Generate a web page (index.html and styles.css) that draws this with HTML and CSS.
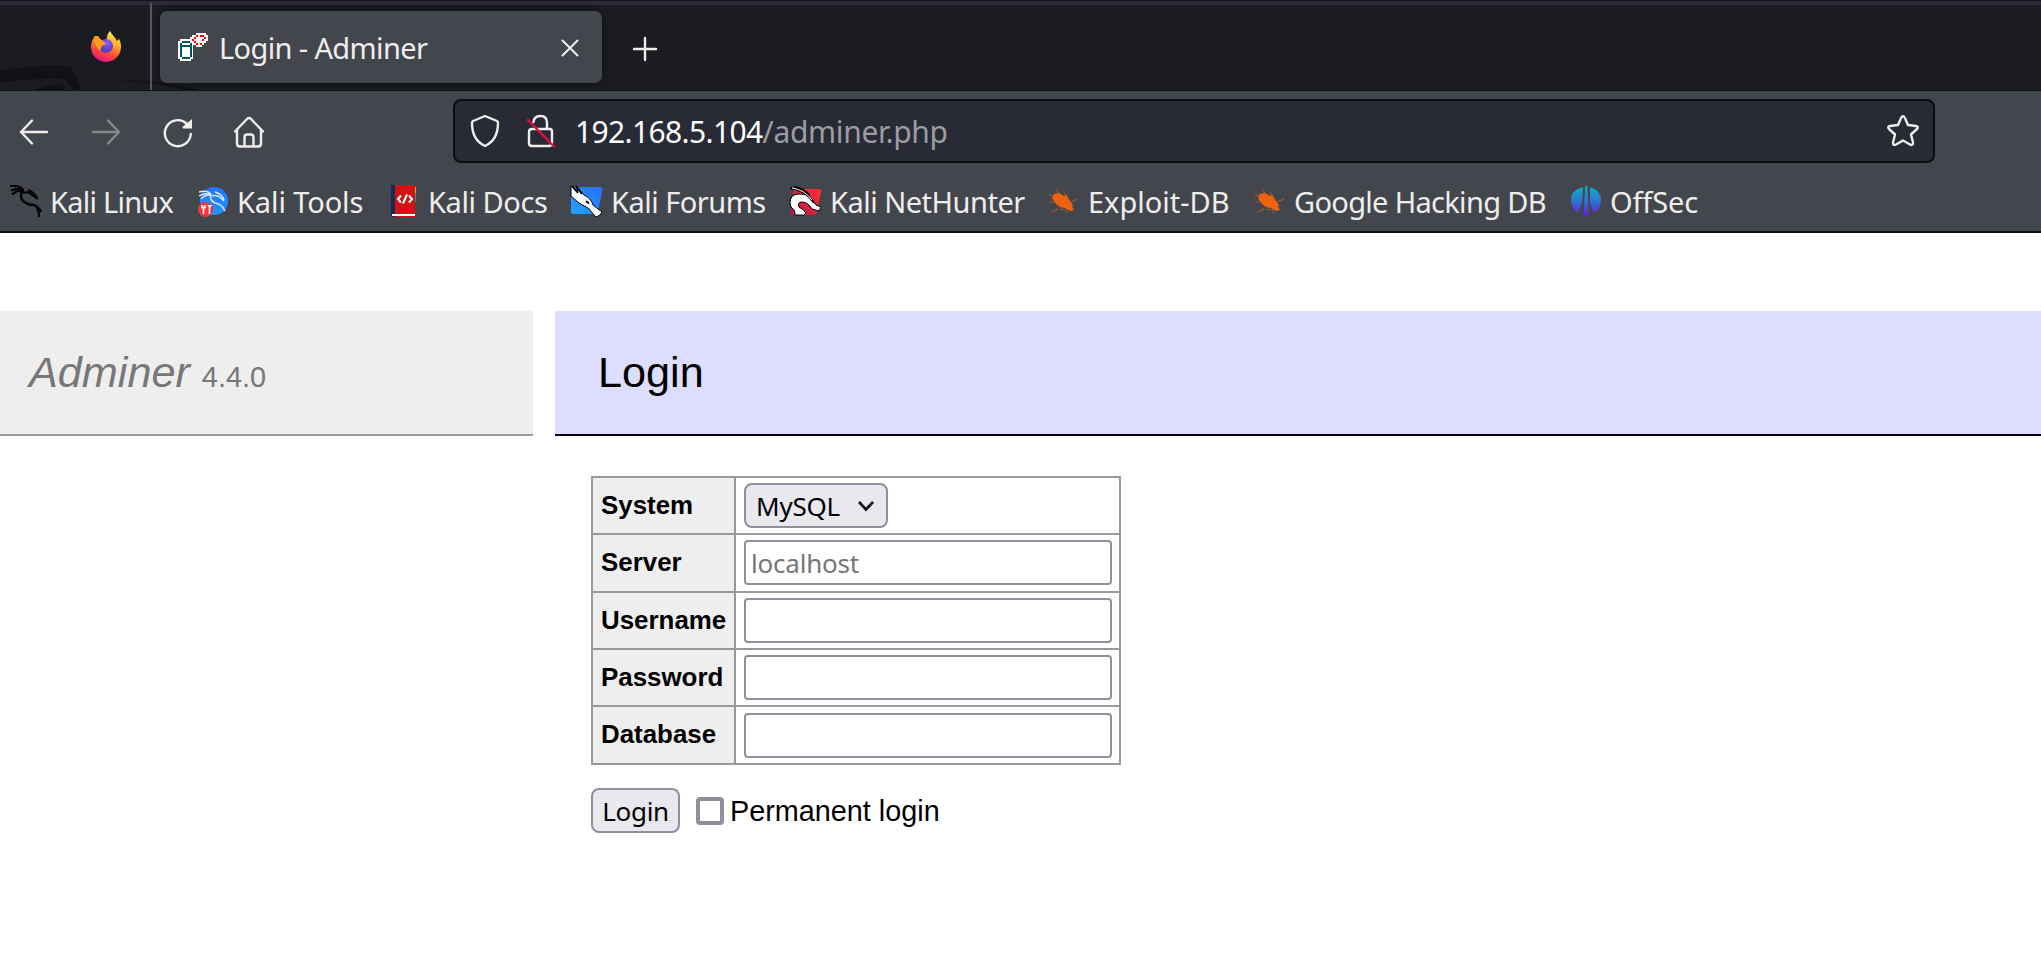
FILE: index.html
```html
<!DOCTYPE html>
<html lang="en">
<head>
<meta charset="utf-8">
<title>Login - Adminer</title>
<link rel="stylesheet" href="styles.css">
</head>
<body>
<header class="browser">
  <div class="tabstrip">
    <svg class="wallpaper" width="240" height="26" viewBox="0 0 240 26" aria-hidden="true">
      <path d="M0 7Q34 0 71 2L82 26H75L64 15Q30 14 0 19Z" fill="#111216"/>
      <path d="M34 26Q48 20 61 20L66 26Z" fill="#111216"/>
      <path d="M110 16Q166 16 200 26H184Q155 18 110 16Z" fill="#111216"/>
    </svg>
    <div class="pinned">
      <svg width="32" height="32" viewBox="0 0 32 32">
        <defs>
          <linearGradient id="fire" x1=".75" y1="0" x2=".35" y2="1"><stop offset="0" stop-color="#fff44f"/><stop offset=".4" stop-color="#ffa22a"/><stop offset=".7" stop-color="#ff4a38"/><stop offset="1" stop-color="#e3118b"/></linearGradient>
          <radialGradient id="globe" cx=".6" cy=".3"><stop offset="0" stop-color="#9a5cff"/><stop offset="1" stop-color="#5b3fc4"/></radialGradient>
        </defs>
        <path d="M1 17C1 12 3 9 5 6L6 9 8 6 10 9 14 11 17 8C17 4 19 2 20 1 22 5 25 7 27 11L29 9C31 12 31 15 31 17A15 15 0 0 1 1 17Z" fill="url(#fire)"/>
        <circle cx="16" cy="16" r="7" fill="url(#globe)"/>
        <path d="M5 6 8 6 10 9Q13 10 16 14L12 16Q10 19 11 21 6 18 4 11Z" fill="#ff9a1f"/>
        <path d="M19 9Q25 12 24 19 27 13 23 8Z" fill="#ffbd3d"/>
      </svg>
    </div>
    <div class="tab">
      <svg class="tab-favicon" width="32" height="32" viewBox="0 0 32 32" shape-rendering="crispEdges">
        <path d="M14 2H18V0H28V2H30V8H28V10H26V12H24V14H18V12H15V26H13V28H2V26H0V8H2V6H12V4H14Z" fill="#fff"/>
        <path d="M4 8H12V10H14V24H12V26H4V24H2V10H4ZM4 14V24H12V14ZM4 10V12H12V10Z" fill="#01526a" fill-rule="evenodd"/>
        <path d="M18 2H20V4H18ZM22 2H26V4H22ZM16 4H18V6H16ZM14 6H16V8H14ZM16 8H18V10H16ZM18 10H20V12H18ZM26 4H28V6H26ZM24 6H26V8H24ZM22 10H24V12H22Z" fill="#f00"/>
      </svg>
      <span class="tab-title">Login - Adminer</span>
      <svg class="tab-close" width="18" height="18" viewBox="0 0 18 18"><path d="M1.500 1.500 16.500 16.500M16.500 1.500 1.500 16.500" class="stroke"/></svg>
    </div>
    <svg class="new-tab" width="26" height="26" viewBox="0 0 26 26"><path d="M13 2V24M2 13H24" class="stroke bold"/></svg>
  </div>

  <div class="navbar">
    <div class="nav-buttons">
      <svg width="32" height="32" viewBox="0 0 32 32"><path d="M14 4.500 3 16 14 27.500M3 16H29" class="stroke bold"/></svg>
      <svg width="32" height="32" viewBox="0 0 32 32" class="disabled"><path d="M18 4.500 29 16 18 27.500M29 16H3" class="stroke bold"/></svg>
      <svg width="32" height="32" viewBox="0 0 32 32"><path d="M24.500 7.500A13 13 0 1 0 28.800 18" class="stroke bold"/><path d="M30 3V12.500H21Q20 11.500 21 10.500Z" class="solid"/></svg>
      <svg width="32" height="32" viewBox="0 0 32 32"><path d="M1 15.500 13.500 2.500Q15 1.500 16.500 2.500L29 15.500M3 13.500V27.500Q3 30.500 6 30.500H24Q27 30.500 27 27.500V13.500M10.500 30.500V21.500Q10.500 18.500 13 18.500H17Q19.500 18.500 19.500 21.500V30.500" class="stroke bold"/></svg>
    </div>
    <div class="urlbar">
      <svg width="30" height="34" viewBox="0 0 30 34"><path d="M15 2 27 7Q28 7.500 28 9 28 26 15 32 2 26 2 9 2 7.500 3 7Z" class="stroke bold"/></svg>
      <svg class="lock" width="30" height="34" viewBox="0 0 30 34"><path d="M7.500 8Q8 2 14.500 2T21 9V15H24Q26 15 26 18V29Q26 32 23 32H6Q3 32 3 29V18Q3 15 6 15H21" class="stroke bold"/><path d="M2 6 28 32.500" class="slash"/></svg>
      <span class="url"><span class="host">192.168.5.104</span><span class="path">/adminer.php</span></span>
      <svg class="star" width="34" height="34" viewBox="0 0 34 34"><path d="M15.300 3.500Q17 0.700 18.700 3.500L22 11 30 12Q33 12.800 31 15L25 20.500 27 28.500Q27 32 24 30.500L17 26.500 10 30.500Q7 32 7 28.500L9 20.500 3 15Q1 12.800 4 12L12 11Z" class="stroke bold"/></svg>
    </div>
  </div>

  <nav class="bookmarks">
    <a class="bookmark linux"><svg width="33" height="33" viewBox="0 0 33 33"><g fill="none" stroke="#000" stroke-width="2"><path d="M0 1Q8 0 13 4M1 5.500Q8 3 13 5M2 9.500Q7 5 14 6"/><path d="M13 4Q9 11 13 16 18 20 24 20 29 22 31 27" stroke-width="2.400"/><path d="M13 8Q18 6 22 10L28 14M18 5Q25 8 27 13M25 20Q29 25 29 32"/></g></svg><span>Kali Linux</span></a>
    <a class="bookmark tools"><svg width="33" height="33" viewBox="0 0 33 33"><defs><linearGradient id="sea" x2="0" y2="1"><stop stop-color="#2574ff"/><stop offset="1" stop-color="#2394ff"/></linearGradient></defs><circle cx="17" cy="16" r="14" fill="url(#sea)"/><g fill="none" stroke="#d8e8fb" stroke-width="1.500"><path d="M2 7Q10 5 14 9M2 11Q8 7 14 10M4 14Q9 9 15 10M14 9Q12 15 18 18 25 19 28 26M15 11Q21 9 27 16M18 7Q25 9 27 15"/></g><circle cx="8.500" cy="24.500" r="7.500" fill="#ee3a3a"/><path d="M5 20V23M8 20V23M4.200 22.500H8.800M6.500 22V29M10.500 20.800H14.500M12.500 21V29" stroke="#fff" stroke-width="1.600"/></svg><span>Kali Tools</span></a>
    <a class="bookmark docs"><svg width="33" height="33" viewBox="0 0 33 33"><path d="M1 0H5V32H1Z" fill="#132b5b"/><path d="M25 2H26V8H25Z" fill="#f6a000"/><path d="M25 8H26V17H25Z" fill="#1b9f80"/><path d="M5 0H25V32H5Z" fill="#d31313"/><path d="M2 29H25V31H2Z" fill="#fff"/><path d="M11 10.500 8 14 11 17.500M19 10.500 22 14 19 17.500M17 9.500 13 18.500" fill="none" stroke="#fff" stroke-width="2"/></svg><span>Kali Docs</span></a>
    <a class="bookmark forums"><svg width="33" height="33" viewBox="0 0 33 33"><defs><linearGradient id="blue" x1="1" x2="0" y2="1"><stop stop-color="#2a6cff"/><stop offset="1" stop-color="#22a4ff"/></linearGradient></defs><path d="M4 2H30Q33 2 32.500 5L28 26Q27 29 24 29H3Q1 29 1 26V5Z" fill="url(#blue)"/><path d="M1 1 8 7 6 1 14 10Q21 13 23 20L32 27 30 30 26 32 18 23 9 18 1 11Z" fill="#fff" stroke="#000"/><path d="M2 1 8 8M6 1 12 9" stroke="#000" stroke-width="1.800"/><path d="M16 16 19 18.500" stroke="#000" stroke-width="1.800"/></svg><span>Kali Forums</span></a>
    <a class="bookmark nethunter"><svg width="33" height="33" viewBox="0 0 33 33"><defs><linearGradient id="red" x1="1" x2="0" y2="1"><stop stop-color="#ff3135"/><stop offset="1" stop-color="#b61648"/></linearGradient></defs><path d="M5 4H30Q33 4 32 7L28 27Q27 30 24 30H4Q1 30 2 26Z" fill="url(#red)"/><path d="M1 18Q1 9 10 9 16 8 22 13L27 20 32 22 30 26 23 24Q19 17 13 17 8 17 10 22 14 24 17 28L15 30H6Q7 25 2 22Z" fill="#fff" stroke="#000"/><path d="M1 3Q17 5 25 18M5 2Q15 3 21 11" fill="none" stroke="#000" stroke-width="1.800"/><path d="M3 3Q16 5 23 15" fill="none" stroke="#fff"/></svg><span>Kali NetHunter</span></a>
    <a class="bookmark exploit"><svg width="33" height="33" viewBox="0 0 33 33"><g id="bug"><path d="M4 12 6 9 10 8 13 9 16 11 19 10 20 13 22 16 25 20 24 22 26 25 22 26 17 23 12 22 8 19 5 15Z" fill="#ef620f"/><path d="M1 9 6 12M8 4 12 9M16 8 19 11M10 23 7 26 3 27M12 24 17 25M23 17 30 14M18 24 19 28M1 17 8 17" fill="none" stroke="#a5562e" stroke-width="1.100"/></g></svg><span>Exploit-DB</span></a>
    <a class="bookmark ghdb"><svg width="33" height="33" viewBox="0 0 33 33"><use href="#bug"/></svg><span>Google Hacking DB</span></a>
    <a class="bookmark offsec"><svg width="33" height="33" viewBox="0 0 33 33"><defs><linearGradient id="aqua" gradientUnits="userSpaceOnUse" x1="16" y1="1" x2="16" y2="31"><stop stop-color="#09b2c5"/><stop offset=".5" stop-color="#2f76cf"/><stop offset="1" stop-color="#681bd8"/></linearGradient></defs><path d="M10 3Q13 2 13 3L12 18 8 28Q1 23 1 15 1 6 10 3ZM21 2.500Q31 6 31 15 31 23 24 28L20 18 20 3ZM15.300 1H17.300L19 31H13.500Z" fill="url(#aqua)"/></svg><span>OffSec</span></a>
  </nav>
</header>

<main class="page">
  <aside class="menu">
    <h1><em>Adminer</em> <span class="version">4.4.0</span></h1>
  </aside>
  <section class="content">
    <h2>Login</h2>
    <form class="login">
      <div class="fields">
        <label for="system">System</label>
        <div class="cell"><div class="select" id="system"><span>MySQL</span><svg width="18" height="12" viewBox="0 0 18 12"><path d="M2 2 9 9.500 16 2" fill="none" stroke="#111" stroke-width="2.600"/></svg></div></div>
        <label for="server">Server</label>
        <div class="cell"><input id="server" placeholder="localhost"></div>
        <label for="username">Username</label>
        <div class="cell"><input id="username"></div>
        <label for="password">Password</label>
        <div class="cell"><input id="password" type="password"></div>
        <label for="database">Database</label>
        <div class="cell"><input id="database"></div>
      </div>
      <div class="actions">
        <button type="button">Login</button>
        <input type="checkbox" id="permanent">
        <label for="permanent">Permanent login</label>
      </div>
    </form>
  </section>
</main>
</body>
</html>
```

FILE: styles.css
```css
* { box-sizing: border-box; }
body {
  margin: 0;
  height: 955px;
  overflow: hidden;
  background: #fff;
  font-family: "Liberation Sans", Arial, sans-serif;
}
svg { display: block; flex: none; }

/* Browser chrome */
.browser {
  height: 233px;
  background: #44464d;
  border-bottom: 2px solid #0c0c11;
  font-family: "Noto Sans", sans-serif;
  color: #eeeeec;
}
.stroke {
  fill: none;
  stroke: #eeeeec;
  stroke-width: 2;
  stroke-linecap: round;
  stroke-linejoin: round;
}
.stroke.bold { stroke-width: 2.4; }
.solid { fill: #eeeeec; }
.disabled { opacity: .4; }
.slash { stroke: #e3123f; stroke-width: 2.4; stroke-linecap: round; }

.tabstrip {
  position: relative;
  display: flex;
  height: 91px;
  padding-top: 5px;
  background: linear-gradient(#121217 0 1px, #2a2a38 1px 5px, #1b1c20 5px);
  border-bottom: 1px solid #121317;
}
.wallpaper { position: absolute; left: 0; bottom: 0; }
.pinned {
  position: relative;
  width: 152px;
  margin-top: -2px;
  padding: 27px 0 0 90px;
  border-right: 2px solid #55565a;
}
.tab {
  position: relative;
  display: flex;
  align-items: center;
  width: 442px;
  height: 72px;
  margin: 6px 0 0 8px;
  padding: 0 23px 0 18px;
  border-radius: 7px;
  background: #44464d;
  box-shadow: 0 0 5px #0c0c10;
}
.tab-favicon { margin-top: 4px; }
.tab-title {
  flex: 1;
  margin: 1px 0 0 9px;
  font-size: 29px;
  line-height: 40px;
  letter-spacing: -.62px;
  white-space: nowrap;
}
.tab-close { margin-top: 1px; }
.new-tab { margin: 31px 0 0 30px; }

.navbar { display: flex; height: 72px; padding-top: 8px; }
.nav-buttons {
  display: flex;
  align-items: center;
  gap: 40px;
  width: 453px;
  height: 66px;
  padding-left: 18px;
}
.urlbar {
  display: flex;
  align-items: center;
  width: 1482px;
  height: 64px;
  padding: 0 13px 0 15px;
  border: 2px solid #0c0d11;
  border-radius: 8px;
  background: #282a35;
}
.lock { margin-left: 26px; }
.url {
  flex: 1;
  margin: 1px 0 0 19px;
  font-size: 30px;
  letter-spacing: -.63px;
  white-space: nowrap;
}
.host { color: #fff; }
.path { color: #9c9da1; letter-spacing: -.3px; }

.bookmarks {
  display: grid;
  grid-template-columns: 187px 193px 180px 219px 259px 206px 316px auto;
  height: 68px;
  padding: 22px 0 0 10px;
}
.bookmark { display: flex; height: 33px; }
.bookmark span {
  margin-left: 7px;
  font-size: 29px;
  line-height: 34px;
  letter-spacing: -.5px;
  white-space: nowrap;
}
.linux span { letter-spacing: -.75px; }
.tools span { letter-spacing: -.1px; }
.docs span { margin-left: 5px; letter-spacing: -.42px; }
.forums span, .nethunter span { margin-left: 8px; }
.exploit span { letter-spacing: 0; }
.ghdb span { letter-spacing: -.68px; }
.offsec span { letter-spacing: -.15px; }

/* Adminer */
.page { display: flex; gap: 22px; padding-top: 78px; }
.menu { width: 533px; flex: none; }
h1, h2 {
  margin: 0;
  height: 125px;
  border-bottom: 2px solid #999;
  font-size: 43.200px;
  font-weight: 400;
  line-height: 54px;
}
h1 { padding: 34px 0 0 29px; background: #eee; color: #777; }
.version { font-size: 28.900px; }
.content { flex: 1; }
h2 { padding: 34px 0 0 43px; background: #ddf; border-color: #000; }
.login { padding: 40px 0 0 36px; }
.fields {
  display: grid;
  grid-template-columns: 141px 383px;
  grid-template-rows: 55px 56px 55px 55px 56px;
  gap: 2px;
  width: 530px;
  padding: 2px;
  background: #999;
}
.fields label {
  padding-left: 8px;
  background: #eee;
  font-size: 25.900px;
  font-weight: 700;
  line-height: 55px;
}
.cell { padding: 5px 7px 0 8px; background: #fff; }
.cell input, .select {
  display: block;
  width: 368px;
  height: 45px;
  margin: 0;
  padding: 0 5px;
  border: 2px solid #8f8f9d;
  border-radius: 4px;
  background: #fff;
  font: 26px "Noto Sans", sans-serif;
  letter-spacing: -.2px;
}
.cell input::placeholder { color: #757575; }
.fields > .cell:last-child { padding-top: 6px; }
.select {
  display: flex;
  align-items: center;
  justify-content: space-between;
  width: 144px;
  padding: 0 11px 0 10px;
  border-radius: 8px;
  background: #e9e9ed;
}
.actions { display: flex; height: 45px; margin-top: 23px; }
.actions button {
  width: 89px;
  height: 45px;
  padding: 0;
  border: 2px solid #8f8f9d;
  border-radius: 8px;
  background: #e9e9ed;
  color: #000;
  font: 26px "Noto Sans", sans-serif;
  letter-spacing: -.3px;
}
.actions input {
  appearance: none;
  width: 28px;
  height: 28px;
  margin: 9px 6px 0 16px;
  border: 4px solid #8f8f9d;
  border-radius: 4px;
  background: #fff;
}
.actions label { font-size: 28.800px; line-height: 46px; }
```
